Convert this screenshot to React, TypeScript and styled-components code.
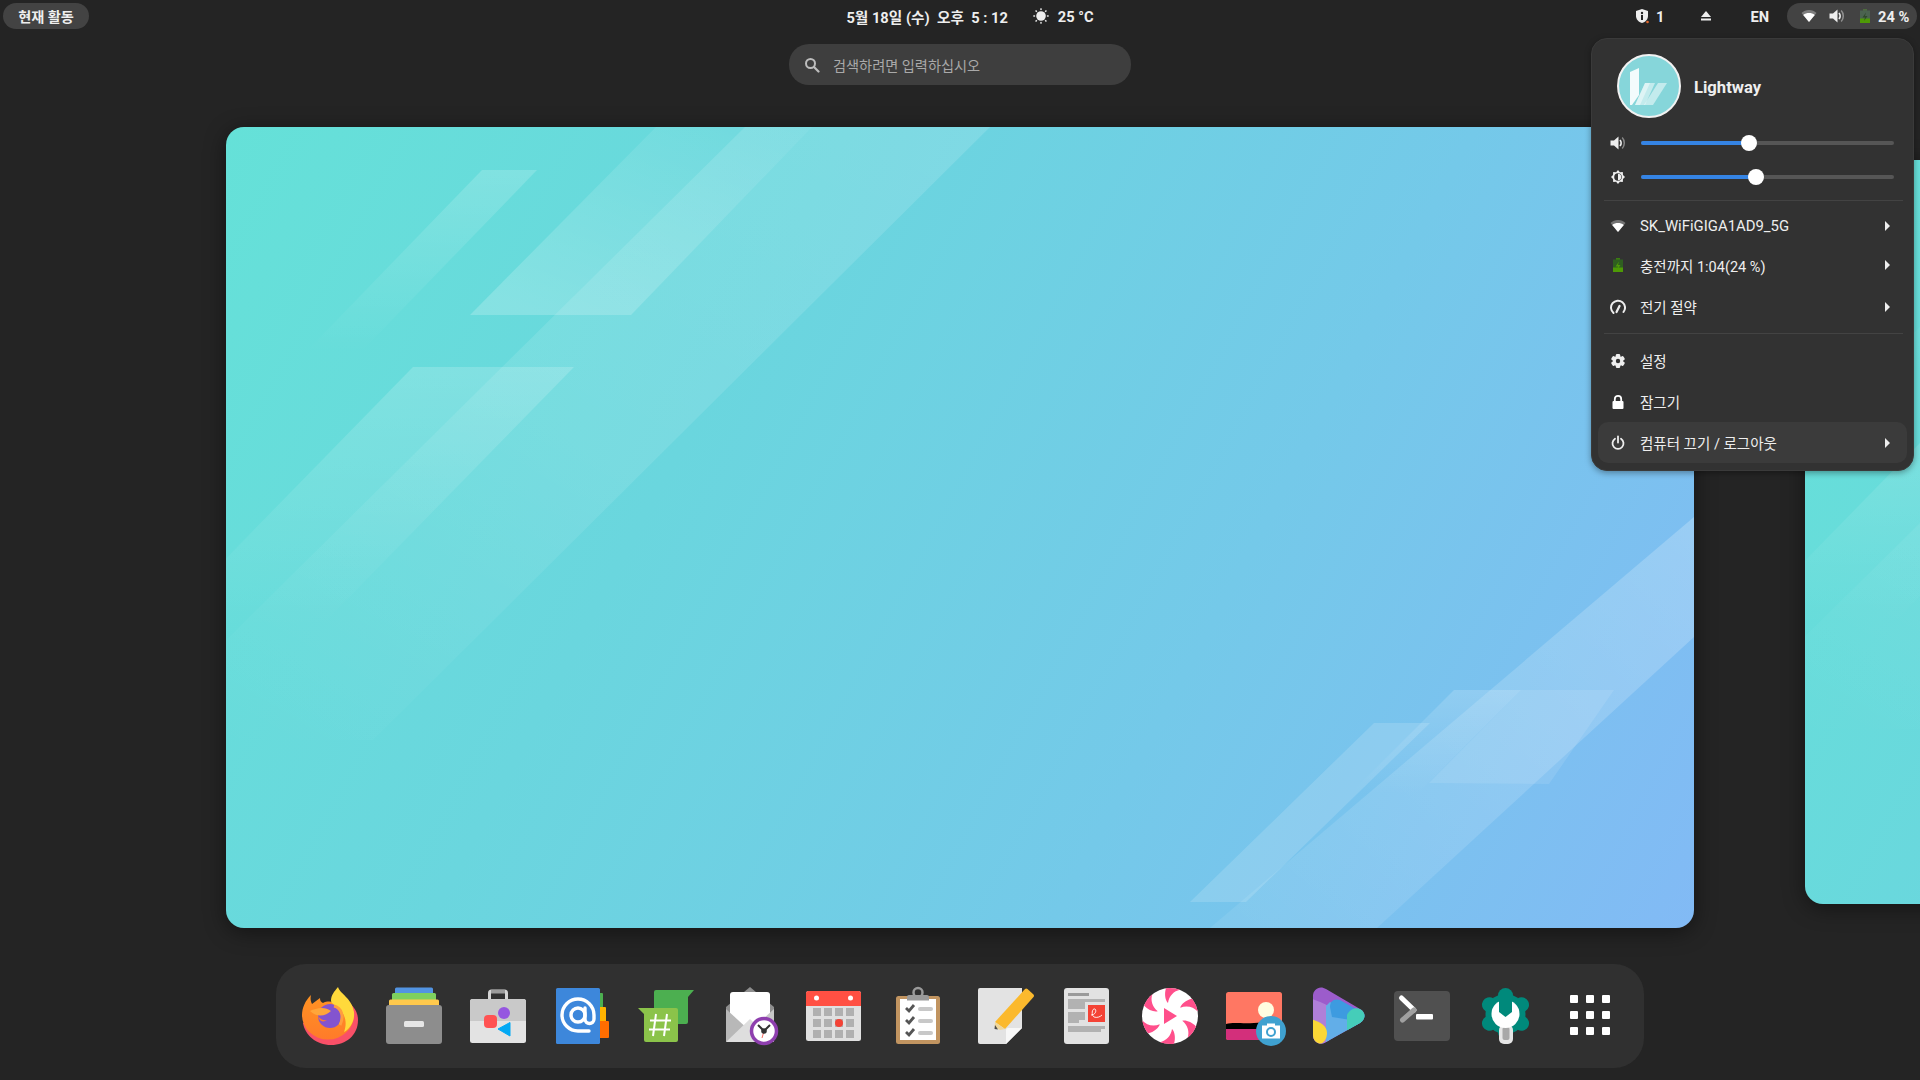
import React from "react";
import styled, { createGlobalStyle } from "styled-components";

const Global = createGlobalStyle`
  html, body { margin: 0; padding: 0; background: #242424; }
  body { font-family: Roboto, "Noto Sans CJK KR", sans-serif; color: #eeeeee; }
  #root { width: 1920px; height: 1080px; }
`;

const Page = styled.div`
  position: relative;
  width: 1920px;
  height: 1080px;
  overflow: hidden;
  display: flex;
  flex-direction: column;
  background: #242424;
`;

/* ---------- top bar ---------- */
const TopBar = styled.header`
  height: 32px;
  flex: none;
  display: grid;
  grid-template-columns: 1fr auto 1fr;
  align-items: center;
  padding: 0 3px;
  font-size: 14.67px;
  font-weight: 700;
  color: #eeeeee;
`;
const BarStart = styled.div`
  display: flex;
  justify-content: flex-start;
`;
const BarEnd = styled.div`
  display: flex;
  justify-content: flex-end;
  align-items: center;
`;
const Pill = styled.div`
  height: 26px;
  display: flex;
  align-items: center;
  background: #434343;
  border-radius: 13px;
`;
const ActivitiesPill = styled(Pill)`
  padding: 0 15px;
  width: 86px;
  box-sizing: border-box;
  justify-content: center;
  font-size: 14.2px;
`;
const SystemPill = styled(Pill)`
  width: 130px;
  box-sizing: border-box;
  padding-left: 14px;
  gap: 12px;
`;
const LatinText = styled.span`
  padding-top: 1px;
  white-space: nowrap;
`;
const BatteryLabel = styled(LatinText)`
  margin-left: -7px;
`;
const Clock = styled.div`
  display: flex;
  align-items: center;
  padding-left: 20px;
  white-space: pre;
`;
const SunSlot = styled.span`
  display: flex;
  margin: 0 9px 0 25px;
`;
const BarItem = styled.div`
  height: 26px;
  padding: 0 18px;
  display: flex;
  align-items: center;
  gap: 6px;
`;
const EjectItem = styled(BarItem)`
  padding: 0 20px 0 16px;
`;
const LangItem = styled(BarItem)`
  padding: 0 18px 0 16px;
`;

/* ---------- search ---------- */
const SearchRow = styled.div`
  flex: none;
  margin-top: 12px;
  display: flex;
  justify-content: center;
`;
const SearchBox = styled.div`
  width: 342px;
  height: 41px;
  box-sizing: border-box;
  background: #3e3e3e;
  border-radius: 20px;
  display: flex;
  align-items: center;
  padding-left: 15px;
  gap: 13px;
  color: #a9a9a9;
  font-size: 14.2px;
`;

/* ---------- workspaces ---------- */
const Workspaces = styled.div`
  flex: none;
  margin-top: 42px;
  padding-left: 226px;
  display: flex;
  align-items: flex-start;
  gap: 111px;
  height: 801px;
`;
const Workspace = styled.div<{ $w: number; $h: number; $top: number }>`
  position: relative;
  flex: none;
  width: ${(p) => p.$w}px;
  height: ${(p) => p.$h}px;
  margin-top: ${(p) => p.$top}px;
  border-radius: 18px;
  overflow: hidden;
  background: linear-gradient(118deg, #65e1d8 0%, #6ad6de 33%, #74c9e9 66%, #82baf5 100%);
  box-shadow: 0 4px 22px rgba(0, 0, 0, 0.45);
`;
const WallShapes = styled.svg`
  position: absolute;
  inset: 0;
  width: 100%;
  height: 100%;
`;

/* ---------- dock ---------- */
const DockRow = styled.div`
  flex: none;
  margin-top: 36px;
  display: flex;
  justify-content: center;
`;
const Dock = styled.nav`
  width: 1368px;
  height: 104px;
  box-sizing: border-box;
  padding: 0 12px;
  background: #303030;
  border-radius: 30px;
  display: flex;
`;
const DockSlot = styled.div`
  width: 84px;
  height: 104px;
  flex: none;
  display: flex;
  align-items: center;
  justify-content: center;
`;
const DockArt = styled.svg.attrs({ viewBox: "0 0 56 56" })`
  width: 56px;
  height: 56px;
  overflow: visible;
  display: block;
  margin-top: -2px;
`;

/* ---------- system menu ---------- */
const Popup = styled.aside`
  position: absolute;
  top: 38px;
  right: 6px;
  width: 323px;
  box-sizing: border-box;
  padding: 15px 6px 7px;
  background: #323232;
  border: 1px solid #3a3a3a;
  border-radius: 16px;
  box-shadow: 0 2px 6px rgba(0, 0, 0, 0.35);
  font-size: 14.5px;
  color: #eeeeee;
`;
const UserHeader = styled.div`
  display: flex;
  align-items: center;
  gap: 13px;
  padding-left: 19px;
  margin-bottom: 8px;
  font-size: 16.6px;
  font-weight: 700;
`;
const UserName = styled.span`
  padding-top: 2px;
`;
const Avatar = styled.svg.attrs({ viewBox: "0 0 64 64" })`
  width: 64px;
  height: 64px;
  flex: none;
  display: block;
`;
const SliderRow = styled.div`
  height: 34px;
  display: flex;
  align-items: center;
  padding: 0 13px 0 12px;
  gap: 15px;
`;
const Track = styled.div`
  position: relative;
  flex: 1;
  height: 4px;
  border-radius: 2px;
  background: #565656;
`;
const TrackFill = styled.div`
  height: 100%;
  border-radius: 2px;
  background: #3584e4;
`;
const Knob = styled.div`
  position: absolute;
  top: -6px;
  width: 16px;
  height: 16px;
  margin-left: -8px;
  border-radius: 50%;
  background: #ffffff;
`;
const Separator = styled.div<{ $top: number; $bottom: number }>`
  height: 1px;
  margin: ${(p) => p.$top}px 4px ${(p) => p.$bottom}px 6px;
  background: #434343;
`;
const MenuRow = styled.div<{ $h?: number; $active?: boolean }>`
  height: ${(p) => p.$h ?? 41}px;
  display: flex;
  align-items: center;
  padding: 0 17px 0 12px;
  gap: 14px;
  border-radius: 10px;
  background: ${(p) => (p.$active ? "#3b3b3b" : "transparent")};
`;
const MenuLabel = styled.span`
  flex: 1;
  white-space: pre;
`;
const NetworkLabel = styled(MenuLabel)`
  font-size: 14.9px;
`;
const Ico = styled.svg.attrs({ viewBox: "0 0 16 16" })`
  width: 16px;
  height: 16px;
  flex: none;
  display: block;
`;
const Arrow = styled.svg.attrs({ viewBox: "0 0 5 10" })`
  width: 5px;
  height: 10px;
  flex: none;
  display: block;
  fill: #eeeeee;
`;

/* ---------- small symbolic icons ---------- */
const W = "#eeeeee";
const WifiIcon = () => (
  <Ico>
    <path d="M8 14 L0.5 5 C2.5 3 5 2 8 2 S13.5 3 15.5 5Z" fill={W} opacity="0.35" />
    <path d="M8 14 L2.2 7 C4 5.6 5.8 5 8 5 S12 5.6 13.8 7Z" fill="#fff" />
  </Ico>
);
const SpeakerIcon = () => (
  <Ico>
    <path d="M0.500 5.500h3.500l4.500-4v13l-4.500-4H0.500z" fill={W} />
    <path d="M10 5c1.400 1.600 1.400 4.400 0 6" stroke={W} strokeWidth="1.800" fill="none" />
    <path d="M12.200 2.500c2.800 3 2.800 8 0 11" stroke={W} strokeWidth="1.500" fill="none" opacity="0.45" />
  </Ico>
);
const BatteryIcon = ({ full }: { full?: boolean }) => (
  <Ico>
    <rect x="6" y="1" width="4" height="2" fill={full ? "#3c7c12" : "#4e6b3e"} />
    <rect x="3" y="2.500" width="10" height="12.500" fill={full ? "#2f5f20" : "#4b6350"} />
    <rect x="3" y="10.500" width="10" height="4.500" fill="#4e9a06" />
    <path d="M9 4.500 5.500 9.500H8L7 13l3.500-5H8z" fill={full ? "#4e9a06" : "#2f4a2a"} />
  </Ico>
);
const ShieldIcon = () => (
  <Ico>
    <path d="M8 1 14 3v5c0 3.400-2.400 5.800-6 7-3.600-1.200-6-3.600-6-7V3z" fill={W} />
    <circle cx="8" cy="5" r="1.200" fill="#242424" />
    <rect x="7" y="7" width="2" height="5" fill="#242424" />
    <circle cx="13.500" cy="14" r="1.300" fill="#e2672b" />
  </Ico>
);
const EjectIcon = () => (
  <Ico>
    <path d="M8 3 13 9H3z" fill={W} />
    <rect x="3" y="10.500" width="10" height="2" fill={W} />
  </Ico>
);
const SunIcon = () => (
  <Ico>
    <circle cx="8" cy="8" r="4.800" fill={W} />
    {[0, 45, 90, 135, 180, 225, 270, 315].map((a) => (
      <rect key={a} x="7.300" y="0.300" width="1.400" height="1.800" fill={W} transform={`rotate(${a} 8 8)`} />
    ))}
  </Ico>
);
const SearchIcon = () => (
  <Ico>
    <circle cx="6.500" cy="6.500" r="4.500" fill="none" stroke="#bdbdbd" strokeWidth="2" />
    <path d="M10 10l4.500 4.500" stroke="#bdbdbd" strokeWidth="2.200" strokeLinecap="round" />
  </Ico>
);
const BrightnessIcon = () => (
  <Ico>
    <path
      d="M8 1l1.900 2.200 2.900-.2.200 2.900L15 8l-2 2.100-.2 2.900-2.900-.2L8 15l-1.900-2.200-2.900.2-.2-2.900L1 8l2-2.100.2-2.900 2.900.2z"
      fill={W}
    />
    <circle cx="8" cy="8" r="3.800" fill="#323232" />
    <path d="M8 4.800a3.200 3.200 0 0 1 0 6.400z" fill={W} />
  </Ico>
);
const GaugeIcon = () => (
  <Ico>
    <path d="M3.500 14A7 7 0 1 1 13.500 13" fill="none" stroke={W} strokeWidth="2" strokeLinecap="round" />
    <path d="M6.500 13 9.500 7" stroke={W} strokeWidth="2.200" strokeLinecap="round" />
  </Ico>
);
const GearIcon = () => (
  <Ico>
    {[0, 60, 120].map((a) => (
      <rect key={a} x="5.800" y="1" width="4.400" height="14" rx="1.200" fill={W} transform={`rotate(${a} 8 8)`} />
    ))}
    <circle cx="8" cy="8" r="5.200" fill={W} />
    <circle cx="8" cy="8" r="2.200" fill="#323232" />
  </Ico>
);
const LockIcon = () => (
  <Ico>
    <path d="M4.800 8V5a3.200 3.200 0 0 1 6.400 0v3" fill="none" stroke="#fff" strokeWidth="1.800" />
    <rect x="2.500" y="7" width="11" height="8" rx="1" fill="#fff" />
  </Ico>
);
const PowerIcon = () => (
  <Ico>
    <path d="M5 3.800a5.500 5.500 0 1 0 6 0" fill="none" stroke={W} strokeWidth="1.800" strokeLinecap="round" />
    <path d="M8 1.500v6" stroke={W} strokeWidth="1.800" strokeLinecap="round" />
  </Ico>
);
const ChevronRight = () => (
  <Arrow>
    <path d="M0 0l5 5-5 5z" />
  </Arrow>
);

/* ---------- wallpaper ---------- */
const Wallpaper = ({ id }: { id: string }) => (
  <WallShapes viewBox="0 0 1468 801" preserveAspectRatio="none">
    <defs>
      <linearGradient id={`${id}fade`} x1="0" y1="0" x2="0" y2="1">
        <stop offset="0" stopColor="#fff" stopOpacity="0.17" />
        <stop offset="1" stopColor="#fff" stopOpacity="0" />
      </linearGradient>
      <linearGradient id={`${id}rise`} x1="0.9" y1="0" x2="0.2" y2="1">
        <stop offset="0" stopColor="#fff" stopOpacity="0.05" />
        <stop offset="1" stopColor="#fff" stopOpacity="0.2" />
      </linearGradient>
      <linearGradient id={`${id}band`} x1="0.9" y1="0" x2="0.1" y2="1">
        <stop offset="0" stopColor="#fff" stopOpacity="0.13" />
        <stop offset="0.5" stopColor="#fff" stopOpacity="0.1" />
        <stop offset="1" stopColor="#fff" stopOpacity="0" />
      </linearGradient>
      <linearGradient id={`${id}br`} x1="1" y1="0" x2="0" y2="1">
        <stop offset="0" stopColor="#fff" stopOpacity="0.22" />
        <stop offset="1" stopColor="#fff" stopOpacity="0.07" />
      </linearGradient>
    </defs>
    <polygon points="256,43 311,43 134,226 79,226" fill={`url(#${id}fade)`} />
    <polygon points="430,0 586,0 405,188 244,188" fill={`url(#${id}rise)`} />
    <polygon points="519,0 764,0 147,613 -101,613" fill={`url(#${id}band)`} />
    <polygon points="187,240 348,240 94,500 -67,500" fill={`url(#${id}fade)`} />
    <polygon points="1468,390 1468,510 1151,801 984,801" fill={`url(#${id}br)`} />
    <polygon points="1295,563 1388,563 1323,657 1203,656" fill="#fff" fillOpacity="0.1" />
    <polygon points="1228,563 1295,563 1190,668 1123,668" fill={`url(#${id}fade)`} />
    <polygon points="1148,596 1204,596 1020,775 964,775" fill="#fff" fillOpacity="0.15" />
  </WallShapes>
);

/* ---------- dock art ---------- */
const Firefox = () => (
  <DockArt>
    <defs>
      <linearGradient id="ffo" x1="0" y1="0" x2="0" y2="1">
        <stop offset="0" stopColor="#ff9322" />
        <stop offset="1" stopColor="#ff7b2a" />
      </linearGradient>
    </defs>
    <path d="M40 12 C50 16 56 24 56 33 C56 48 44 58 29 58 C14 58 3 48 1 36Z" fill="#f95068" />
    <path
      d="M0 28 C0 21 3 14 9 8 C8 12 9 15 10 17 L18 11 C18 14 19 15 21 16 C25 14 31 14 35 17 L52 28 A26 24.500 0 0 1 0 28Z"
      fill="url(#ffo)"
    />
    <path
      d="M36 0 C38 7 50 11 52 25 C53 34 48 42 42 45 C44 40 45 32 40 25 C36 19 30 18 29 14 C29 8 32 5 36 0Z"
      fill="#ffd93b"
    />
    <circle cx="28" cy="29" r="12" fill="#8354cf" />
    <path d="M32 19 C40 21 42 30 38 38" fill="none" stroke="#ff9d3f" strokeWidth="3" />
    <path d="M8 24 C14 21 23 19 29 24 C24 29 15 31 8 24Z" fill="#ffa63a" />
    <path d="M16 29 C19 33 22 34 25 33 C21 36 17 34 16 29Z" fill="#ff7b2a" />
  </DockArt>
);
const Files = () => (
  <DockArt>
    <rect x="9" y="0.500" width="38" height="8" rx="1.500" fill="#5294e2" />
    <rect x="6" y="6" width="44" height="8" rx="1.500" fill="#7ed05e" />
    <rect x="3" y="12.500" width="50" height="8" rx="1.500" fill="#ffc94d" />
    <rect x="0" y="18" width="56" height="39" rx="3" fill="#8d8d8d" />
    <rect x="18" y="34" width="20" height="6" rx="1.500" fill="#e6e6e6" />
  </DockArt>
);
const Shop = () => (
  <DockArt>
    <path d="M19.500 13 V6 a2 2 0 0 1 2-2 h13 a2 2 0 0 1 2 2 V13" fill="none" stroke="#d4d4d4" strokeWidth="3" />
    <rect x="21" y="3" width="14" height="3.500" fill="#9b9b9b" />
    <rect x="0" y="12" width="56" height="44" rx="2.500" fill="#e3e3e3" />
    <path d="M0 34V14.500A2.500 2.500 0 0 1 2.500 12h51a2.500 2.500 0 0 1 2.500 2.500V34z" fill="#c9c9c9" />
    <rect x="14" y="28" width="13" height="13" rx="4" fill="#ff5252" />
    <circle cx="34" cy="26" r="6" fill="#9556e0" />
    <path d="M28 42 40 35.500V49z" fill="#03a9f4" stroke="#03a9f4" strokeLinejoin="round" />
  </DockArt>
);
const Contacts = () => (
  <DockArt>
    <rect x="42" y="6" width="7" height="15" rx="1" fill="#4caf50" />
    <rect x="42" y="20" width="10" height="15" rx="1" fill="#ffb300" />
    <rect x="42" y="34" width="13" height="17" rx="1" fill="#ff6d00" />
    <rect x="2" y="1" width="44" height="56" rx="1.500" fill="#3d87db" />
    <circle cx="24" cy="28" r="7" fill="none" stroke="#fff" strokeWidth="3.400" />
    <path
      d="M31 21 V32 a4.500 4.500 0 0 0 9 0 V28 a16 16 0 1 0 -16 16 H35"
      fill="none"
      stroke="#fff"
      strokeWidth="3.400"
      strokeLinecap="round"
    />
  </DockArt>
);
const Hash = () => (
  <DockArt>
    <path d="M16 5a2 2 0 0 1 2-2h38l-6 7v25a2 2 0 0 1-2 2H18a2 2 0 0 1-2-2z" fill="#4caf50" />
    <path d="M0 21h38a2 2 0 0 1 2 2v30a2 2 0 0 1-2 2H8a2 2 0 0 1-2-2V27z" fill="#8bc34a" />
    <path d="M18 27l-3 22M29 27l-3 22M12 33.500H33M11 42.500H32" stroke="#fff" strokeWidth="2" fill="none" />
  </DockArt>
);
const Mail = () => (
  <DockArt>
    <path d="M4 20 28 0 52 20V30H4z" fill="#8e8e8e" />
    <rect x="8" y="5" width="40" height="40" rx="3" fill="#fff" />
    <path d="M4 22 28 44 4 55z" fill="#b8b8b8" />
    <path d="M52 22 28 44l24 11z" fill="#c8c8c8" />
    <path d="M4 55 28 32 52 55Z" fill="#dedede" />
    <circle cx="42" cy="44" r="12.500" fill="#fff" stroke="#8e3fae" strokeWidth="3.500" />
    <path d="M42 44l-6-6M42 44l6-6" stroke="#333" strokeWidth="2" />
    <path d="M42 44l-2 7" stroke="#f44336" strokeWidth="0.800" />
    <circle cx="42" cy="44" r="2.800" fill="#333" />
  </DockArt>
);
const Calendar = () => (
  <DockArt>
    <rect x="0" y="4" width="55" height="50" rx="2.500" fill="#e0e0e0" />
    <path d="M0 19V6.500A2.500 2.500 0 0 1 2.500 4h50A2.500 2.500 0 0 1 55 6.500V19z" fill="#ff5043" />
    <circle cx="10.500" cy="11" r="2.500" fill="#fff" />
    <circle cx="44.500" cy="11" r="2.500" fill="#fff" />
    {[21, 32, 43].map((y) =>
      [7, 18, 29, 40].map((x) => <rect key={`${x}-${y}`} x={x} y={y} width="8" height="8" fill="#b0b0b0" />)
    )}
    <circle cx="33" cy="36" r="4" fill="#f44336" />
  </DockArt>
);
const Tasks = () => (
  <DockArt>
    <rect x="6" y="9" width="44" height="48" rx="2.500" fill="#c19460" />
    <rect x="10" y="12" width="36" height="41" fill="#fff" />
    <circle cx="28" cy="5.500" r="4.500" fill="none" stroke="#9a9a9a" strokeWidth="2.500" />
    <path d="M17 13.500V10a2 2 0 0 1 2-2h18a2 2 0 0 1 2 2v3.500z" fill="#9a9a9a" />
    {[21, 33, 45].map((y) => (
      <g key={y}>
        <path d={`M16 ${y}l3 3 5-6`} fill="none" stroke="#555" strokeWidth="2.800" />
        <rect x="28" y={y - 1} width="15" height="4" rx="2" fill="#c8c8c8" />
      </g>
    ))}
  </DockArt>
);
const Note = () => (
  <DockArt>
    <path d="M6 1h42v40L32 57H6a2 2 0 0 1-2-2V3a2 2 0 0 1 2-2z" fill="#e3e3e3" />
    <path d="M48 41H34a2 2 0 0 0-2 2v14z" fill="#f7f7f7" />
    <path d="M21 35 51 2a2 2 0 0 1 2.500 0l6 5.500a2 2 0 0 1 0 2.500L31 42z" fill="#fbb92d" />
    <path d="M21 35l10 7-5 1-5.500-2.500z" fill="#f0d79a" />
    <path d="M21 38l3 4.500-3.500-.5z" fill="#4a4a4a" />
  </DockArt>
);
const Doc = () => (
  <DockArt>
    <rect x="6" y="1" width="45" height="56" rx="3" fill="#e2e2e2" />
    <rect x="10" y="6" width="21" height="3" fill="#9a9a9a" />
    <rect x="10" y="12" width="37" height="3" fill="#b2b2b2" />
    <rect x="10" y="15" width="17" height="7" fill="#b2b2b2" />
    <rect x="10" y="25" width="17" height="8" fill="#b2b2b2" />
    <rect x="10" y="33" width="11" height="3" fill="#b2b2b2" />
    <rect x="10" y="39" width="37" height="3" fill="#b2b2b2" />
    <rect x="10" y="42" width="33" height="3" fill="#b2b2b2" />
    <rect x="30" y="18" width="17" height="17" fill="#f44336" />
    <path d="M33 28c4 0 6-4 4-6-3-1-4 6-1 8 3 1 6 0 8-2" fill="none" stroke="#fff" strokeWidth="0.900" />
  </DockArt>
);
const Kaleido = () => (
  <DockArt>
    <circle cx="28" cy="29" r="28" fill="#fff" />
    {[0, 60, 120, 180, 240, 300].map((a) => (
      <path
        key={a}
        d="M-4 -27.700 A28 28 0 0 1 10 -26.200 C4 -25 -1 -20 -2 -13 C-4.500 -15 -6 -22 -4 -27.700Z"
        fill="#ff4f8b"
        transform={`translate(28 29) rotate(${a})`}
      />
    ))}
    <path d="M22 21 35 29 22 37z" fill="#ff4f8b" />
  </DockArt>
);
const Shot = () => (
  <DockArt>
    <rect x="0" y="5" width="56" height="48" rx="2.500" fill="#ff7763" />
    <path d="M0 42H56V50.500A2.500 2.500 0 0 1 53.500 53H2.500A2.500 2.500 0 0 1 0 50.500z" fill="#d32f7b" />
    <path d="M0 37c8-2 16 0 28-1s20 1 28 0v6H0z" fill="#000" />
    <circle cx="40" cy="23" r="8" fill="#fffde0" />
    <circle cx="45" cy="44" r="15" fill="#3fa1d0" />
    <rect x="36" y="38.500" width="18" height="13" fill="#fff" />
    <rect x="41" y="36.500" width="8" height="3" fill="#fff" />
    <circle cx="45" cy="45" r="4" fill="none" stroke="#3fa1d0" strokeWidth="2" />
  </DockArt>
);
const PlayArt = () => (
  <DockArt>
    <defs>
      <clipPath id="playClip">
        <path d="M3 9C3 2 10-2 16 2L50 22C56 25 56 32 50 36L16 55C10 59 3 55 3 48Z" />
      </clipPath>
    </defs>
    <g clipPath="url(#playClip)">
      <rect x="0" y="-2" width="60" height="62" fill="#9c5ccb" />
      <path d="M0 11C6 14 12 15 20 20V60H0z" fill="#b07fd8" />
      <path d="M20 15 60 38V60H16V19z" fill="#62aee8" />
      <path d="M20 20C20 14 24 11 30 13L60 30V36L22 30z" fill="#3d9be0" />
      <path d="M37 48V28C40 21 48 19 54 24L60 30V50z" fill="#45cdb9" />
      <path d="M0 32C8 34 17 38 17 46C17 56 8 60 0 60z" fill="#fbd836" />
    </g>
  </DockArt>
);
const Terminal = () => (
  <DockArt>
    <rect x="0" y="4" width="56" height="50" rx="4" fill="#505050" />
    <path d="M7.500 11 20 23" stroke="#fff" strokeWidth="5" strokeLinecap="round" />
    <path d="M20 23 8.500 33" stroke="#a0a0a0" strokeWidth="5" strokeLinecap="round" />
    <rect x="22" y="27" width="17" height="5.500" rx="1" fill="#fff" />
  </DockArt>
);
const SettingsArt = () => (
  <DockArt>
    <circle cx="27.500" cy="27" r="20" fill="#00897b" />
    {[0, 60, 120, 180, 240, 300].map((a) => (
      <circle key={a} cx="27.500" cy="8.500" r="7.500" fill="#00897b" transform={`rotate(${a} 27.500 27)`} />
    ))}
    <rect x="21" y="38" width="14" height="19" rx="5" fill="#e6e6e6" />
    <rect x="24.500" y="40" width="7" height="13" rx="2" fill="#a8a8a8" />
    <circle cx="27.500" cy="27" r="14" fill="#fff" />
    <path d="M21 8h13v17l-6.500 5-6.500-5z" fill="#00897b" />
  </DockArt>
);
const AppGrid = () => (
  <DockArt>
    {[8, 24, 40].map((y) =>
      [8, 24, 40].map((x) => <rect key={`${x}-${y}`} x={x} y={y} width="8" height="8" rx="1" fill="#fff" />)
    )}
  </DockArt>
);

const dockApps = [
  Firefox, Files, Shop, Contacts, Hash, Mail, Calendar, Tasks,
  Note, Doc, Kaleido, Shot, PlayArt, Terminal, SettingsArt, AppGrid,
];

const sliders = [
  { Icon: SpeakerIcon, value: 42.7 },
  { Icon: BrightnessIcon, value: 45.5 },
];

export default function App() {
  return (
    <Page>
      <Global />
      <TopBar>
        <BarStart>
          <ActivitiesPill>현재 활동</ActivitiesPill>
        </BarStart>
        <Clock>
          5월 18일 (수)  오후  5 : 12
          <SunSlot>
            <SunIcon />
          </SunSlot>
          <LatinText>25 °C</LatinText>
        </Clock>
        <BarEnd>
          <BarItem>
            <ShieldIcon />
            <LatinText>1</LatinText>
          </BarItem>
          <EjectItem>
            <EjectIcon />
          </EjectItem>
          <LangItem>
            <LatinText>EN</LatinText>
          </LangItem>
          <SystemPill>
            <WifiIcon />
            <SpeakerIcon />
            <BatteryIcon />
            <BatteryLabel>24 %</BatteryLabel>
          </SystemPill>
        </BarEnd>
      </TopBar>

      <SearchRow>
        <SearchBox>
          <SearchIcon />
          검색하려면 입력하십시오
        </SearchBox>
      </SearchRow>

      <Workspaces>
        <Workspace $w={1468} $h={801} $top={0}>
          <Wallpaper id="a" />
        </Workspace>
        <Workspace $w={1363} $h={744} $top={33}>
          <Wallpaper id="b" />
        </Workspace>
      </Workspaces>

      <DockRow>
        <Dock>
          {dockApps.map((AppIcon, i) => (
            <DockSlot key={i}>
              <AppIcon />
            </DockSlot>
          ))}
        </Dock>
      </DockRow>

      <Popup>
        <UserHeader>
          <Avatar>
            <circle cx="32" cy="32" r="31" fill="#86d6da" stroke="#f2f2f2" strokeWidth="2" />
            <polygon points="13,18 22,14 22,41 15,51 13,51" fill="#fff" fillOpacity="0.9" />
            <polygon points="28,29 38,29 28,51 18,51" fill="#fff" fillOpacity="0.5" />
            <polygon points="41,29 50,29 36,51 27,51" fill="#fff" fillOpacity="0.5" />
            <polygon points="28,29 33,29 23,51 18,51" fill="#fff" fillOpacity="0.45" />
          </Avatar>
          <UserName>Lightway</UserName>
        </UserHeader>
        {sliders.map(({ Icon, value }) => (
          <SliderRow key={value}>
            <Icon />
            <Track>
              <TrackFill style={{ width: `${value}%` }} />
              <Knob style={{ left: `${value}%` }} />
            </Track>
          </SliderRow>
        ))}
        <Separator $top={6} $bottom={6} />
        <MenuRow $h={38}>
          <WifiIcon />
          <NetworkLabel>SK_WiFiGIGA1AD9_5G</NetworkLabel>
          <ChevronRight />
        </MenuRow>
        <MenuRow $h={40}>
          <BatteryIcon full />
          <MenuLabel>충전까지 1:04(24 %)</MenuLabel>
          <ChevronRight />
        </MenuRow>
        <MenuRow $h={43}>
          <GaugeIcon />
          <MenuLabel>전기 절약</MenuLabel>
          <ChevronRight />
        </MenuRow>
        <Separator $top={5} $bottom={6} />
        <MenuRow>
          <GearIcon />
          <MenuLabel>설정</MenuLabel>
        </MenuRow>
        <MenuRow>
          <LockIcon />
          <MenuLabel>잠그기</MenuLabel>
        </MenuRow>
        <MenuRow $active>
          <PowerIcon />
          <MenuLabel>컴퓨터 끄기 / 로그아웃</MenuLabel>
          <ChevronRight />
        </MenuRow>
      </Popup>
    </Page>
  );
}
